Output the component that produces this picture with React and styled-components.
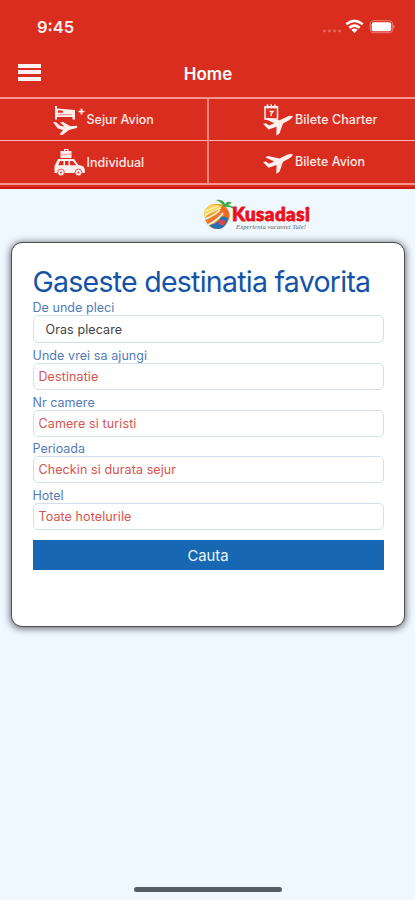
import styled, { createGlobalStyle } from "styled-components";

const GlobalStyle = createGlobalStyle`
  * {
    box-sizing: border-box;
  }

  body {
    margin: 0;
    background: #f0f8ff;
    font-family: Inter, "Liberation Sans", sans-serif;
  }
`;

const Screen = styled.div`
  display: flex;
  flex-direction: column;
  width: 415px;
  height: 900px;
  overflow: hidden;
  background: #f0f8ff;
`;

const Header = styled.header`
  height: 189px;
  background: #d92d20;
  color: #fff;
  border-bottom: 2px solid #d01a10;
`;

const StatusBar = styled.div`
  display: flex;
  align-items: center;
  height: 54px;
  padding: 0 20px 0 37px;
`;

const Time = styled.span`
  flex: 1;
  font-size: 16.5px;
  font-weight: 600;
  color: #ffeeec;
`;

const NavBar = styled.div`
  display: grid;
  grid-template-columns: 60px 1fr 60px;
  align-items: center;
  height: 43px;
  padding-bottom: 3px;
`;

const MenuButton = styled.button`
  display: flex;
  flex-direction: column;
  gap: 2.5px;
  width: 23px;
  margin: -4px 0 0 18px;
  padding: 0;
  border: none;
  background: none;

  span {
    height: 4px;
    background: #fff1f0;
  }
`;

const PageTitle = styled.h1`
  margin: 0;
  padding-left: 1px;
  text-align: center;
  font-size: 17px;
  line-height: 20px;
  font-weight: 600;
`;

const Tabs = styled.nav`
  display: grid;
  grid-template-columns: 209px 206px;
  grid-template-rows: 42px 42px;
  border-top: 2px solid #f7958e;
  border-bottom: 2px solid #f7958e;
`;

const Tab = styled.a`
  display: flex;
  align-items: center;
  padding-left: ${({ $left }) => ($left ? "53px" : "54px")};
  padding-bottom: ${({ $raise }) => $raise || 0}px;
  border-right: ${({ $left }) => ($left ? "2px solid #f3837b" : "none")};
  border-bottom: ${({ $top }) => ($top ? "1px solid #ffb5b0" : "none")};
  font-size: 12.5px;
  font-weight: 500;
  letter-spacing: ${({ $spacing }) => $spacing || 0}px;
  color: #ffe9e6;
  white-space: nowrap;

  svg {
    flex: none;
    margin-right: ${({ $left }) => ($left ? "0.6px" : "0")};
  }
`;

const LogoRow = styled.div`
  display: flex;
  height: 53px;
  padding: 9px 0 0 203px;
`;

const LogoText = styled.div`
  display: flex;
  flex-direction: column;
  padding-top: 7px;
  margin-left: -3px;
`;

const LogoName = styled.strong`
  font-family: Lato, sans-serif;
  font-size: 18.8px;
  line-height: 17px;
  font-weight: 900;
  letter-spacing: 0.45px;
  color: #ed111c;
  -webkit-text-stroke: 0.9px #ed111c;
`;

const LogoTagline = styled.em`
  margin: 1px 0 0 4px;
  font-family: "Liberation Serif", serif;
  font-size: 6.8px;
  line-height: 8px;
  color: #62666c;
  white-space: nowrap;
`;

const Card = styled.main`
  width: 394px;
  height: 385px;
  margin-left: 11px;
  padding: 22px 21px 0 20.5px;
  border: 1px solid #4b4e50;
  border-radius: 11px;
  background: #fff;
  box-shadow: 0 1px 7px 1px rgba(0, 0, 0, 0.55);
`;

const CardTitle = styled.h2`
  height: 34px;
  margin: 0;
  font-size: 28.5px;
  line-height: 33px;
  font-weight: 400;
  letter-spacing: -0.74px;
  color: #1454a8;
  white-space: nowrap;
`;

const Form = styled.form`
  display: flex;
  flex-direction: column;
  gap: 3.8px;
  width: 351px;
`;

const Field = styled.label`
  display: block;
  font-size: 12.5px;
  line-height: 16px;
  letter-spacing: ${({ $spacing }) => $spacing || 0}px;
  color: #527abc;
`;

const FieldLabel = styled.span`
  display: block;
  height: 16px;
  line-height: 17px;
`;

const FieldBox = styled.span`
  display: flex;
  align-items: center;
  height: ${({ $select }) => ($select ? "28px" : "27px")};
  padding-top: 1px;
  padding-left: ${({ $select }) => ($select ? "12px" : "5px")};
  border: 1px solid #d3dfef;
  border-radius: 5px;
  background: #fff;
  font-size: 12.5px;
  letter-spacing: ${({ $spacing }) => $spacing || 0}px;
  color: ${({ $select }) => ($select ? "#414141" : "#d9534d")};
`;

const SubmitButton = styled.button`
  height: 30px;
  margin-top: 6px;
  padding: 2px 0 0;
  border: none;
  background: #1767b3;
  color: #edf5fc;
  font-family: inherit;
  font-size: 14.8px;
`;

const HomeIndicator = styled.div`
  width: 148px;
  height: 5px;
  margin: auto auto 8px 134px;
  border-radius: 3px;
  background: #565d62;
`;

function StatusIcons() {
  return (
    <svg width="76" height="20" viewBox="0 0 76 20" fill="#fff">
      <g fill="#ea6a60">
        <circle cx="5.5" cy="14" r="1.4" />
        <circle cx="10.5" cy="14" r="1.4" />
        <circle cx="15.5" cy="14" r="1.4" />
        <circle cx="20.5" cy="14" r="1.4" />
      </g>
      <g fill="none" stroke="#fff" strokeWidth="2.6">
        <path d="M27.3 7.2Q35.5 .6 43.7 7.2" />
        <path d="M30.3 10.7Q35.5 6.6 40.7 10.7" />
      </g>
      <path d="M32.3 12.7Q35.5 10.2 38.7 12.7L35.5 16Z" />
      <rect x="51.2" y="3.7" width="22.5" height="12" rx="3.3" fill="#d92d20" stroke="#f07f77" />
      <rect x="52.7" y="5.2" width="19.5" height="9" rx="2" />
      <path d="M74.5 7.7Q76.8 9.7 74.5 11.7Z" fill="#f29a93" />
    </svg>
  );
}

const PLANE =
  "M0 8.5L3 8 6 10.3 11.2 8 2.3 3.7 5 2.5 16.5 5 23.5 1.6Q27.5 -.2 30 1 29.3 3 26 5L20 8.2 16.5 18.2 13.3 20.2 13.6 11.5 5.5 14.2Z";

function StayIcon() {
  return (
    <svg width="33" height="32" viewBox="0 0 33 32" fill="#fff0ee">
      <path d="M2 2H4V4.5L22 6V15.5H19.5V13H4V15.5H2Z" />
      <path d="M5 6.2L10 6.7V8.8H5Z" fill="#d92d20" />
      <path d="M5 10.7H19" stroke="#e8736a" strokeWidth=".8" />
      <path d="M28.5 4.5V10.5M25.5 7.5H31.5" stroke="#fff0ee" strokeWidth="1.7" />
      <path d="M0 18L3 18.2 7.5 22 11.5 22.5 7 18.4 10 18 17.5 22.2 23 21.7Q25.5 22.2 23.5 24L16 26 9.5 31 6.5 30.5 10 26 4.5 24.2Z" />
    </svg>
  );
}

function CarIcon() {
  return (
    <svg width="33" height="30" viewBox="0 0 33 30" fill="#fff0ee">
      <path d="M11 4V2H15.5V4H18.5V11H7.5V4ZM12.3 4H14.3V3H12.3Z" />
      <path d="M5 12H21L25.5 18 29.5 19Q32 20 32 26H1.5V19Z" />
      <path d="M7 14H10.5V18.3H5.2ZM12 14H15.5V18.3H12ZM17 14H20L23.2 18.3H17Z" fill="#d92d20" />
      <path d="M8 8.2L18 7" stroke="#e8736a" strokeWidth=".7" />
      <g stroke="#d92d20" strokeWidth=".8">
        <circle cx="8" cy="25.5" r="3.4" />
        <circle cx="25.5" cy="25.5" r="3.4" />
      </g>
      <circle cx="8" cy="25.5" r=".9" fill="#d92d20" />
      <circle cx="25.5" cy="25.5" r=".9" fill="#d92d20" />
    </svg>
  );
}

function CharterIcon() {
  return (
    <svg width="32" height="34" viewBox="0 0 32 34" fill="#fff0ee">
      <path d="M2 3.7H14.5V16H2Z" fill="none" stroke="#fff0ee" strokeWidth="1.5" />
      <path d="M2 4.5H14.5M4.5 1.3V5.5M8.2 1.3V5.5M12 1.3V5.5" stroke="#fff0ee" strokeWidth="1.5" />
      <path d="M6.5 8.5H10L8.2 11V13" fill="none" stroke="#fff0ee" strokeWidth="1.4" />
      <path d={PLANE} transform="translate(0 12.3)" />
    </svg>
  );
}

function PlaneIcon() {
  return (
    <svg width="32" height="24" viewBox="0 0 32 24" fill="#fff0ee">
      <path d={PLANE} transform="translate(0 3.5)" />
    </svg>
  );
}

function LogoMark() {
  return (
    <svg width="32" height="33" viewBox="0 0 32 33">
      <path d="M1 15Q4 5 14 6 25 5 26 16 26 29 16 31 6 32 3 23Z" fill="#f49b24" />
      <path d="M1 14Q5 5 15 7L22 10Q10 10 2 20Z" fill="#ffd45b" />
      <path d="M19 8Q30 13 25 23L20 28Q24 17 17 12Z" fill="#f26a22" />
      <path d="M2 22Q12 18 18 12L21 15Q17 21 5 26Z" fill="#f0782a" />
      <path d="M2.5 21Q12 17 17 12M5 27Q15 22 20 15" fill="none" stroke="#fdf6ec" strokeWidth="1.6" />
      <path d="M6.5 27Q14 26 18 19 22 17 25 21 22 31 15 31 9 31 6.5 27Z" fill="#2471b5" />
      <path d="M17 21Q20 24 23 22L21 27Q17 28 15 24Z" fill="#dc4653" />
      <path d="M3 13L15 8M2 17L18 10" stroke="#fff9d8" strokeWidth="1.1" />
      <path d="M20 9Q20 5 13 2 20 1 22 6 25 2 29 5L25 7Q31 8 31 11 26 8 20 9Z" fill="#43a947" />
    </svg>
  );
}

const fields = [
  { label: "De unde pleci", value: "Oras plecare", select: true, ls: 0.05, vs: 0.1 },
  { label: "Unde vrei sa ajungi", value: "Destinatie", ls: 0.08, vs: 0.1 },
  { label: "Nr camere", value: "Camere si turisti", ls: 0.03, vs: 0.12 },
  { label: "Perioada", value: "Checkin si durata sejur", ls: 0, vs: 0.1 },
  { label: "Hotel", value: "Toate hotelurile", ls: 0, vs: 0.1 },
];

export default function App() {
  return (
    <Screen>
      <GlobalStyle />
      <Header>
        <StatusBar>
          <Time>9:45</Time>
          <StatusIcons />
        </StatusBar>
        <NavBar>
          <MenuButton aria-label="Meniu">
            <span />
            <span />
            <span />
          </MenuButton>
          <PageTitle>Home</PageTitle>
        </NavBar>
        <Tabs>
          <Tab $left $top $spacing={-0.05}>
            <StayIcon />
            Sejur Avion
          </Tab>
          <Tab $top $spacing={0.05}>
            <CharterIcon />
            Bilete Charter
          </Tab>
          <Tab $left>
            <CarIcon />
            Individual
          </Tab>
          <Tab $raise={1}>
            <PlaneIcon />
            Bilete Avion
          </Tab>
        </Tabs>
      </Header>

      <LogoRow>
        <LogoMark />
        <LogoText>
          <LogoName>Kusadasi</LogoName>
          <LogoTagline>Experienta vacantei Tale!</LogoTagline>
        </LogoText>
      </LogoRow>

      <Card>
        <CardTitle>Gaseste destinatia favorita</CardTitle>
        <Form>
          {fields.map((field) => (
            <Field key={field.label} $spacing={field.ls}>
              <FieldLabel>{field.label}</FieldLabel>
              <FieldBox $select={field.select} $spacing={field.vs}>
                {field.value}
              </FieldBox>
            </Field>
          ))}
          <SubmitButton type="button">Cauta</SubmitButton>
        </Form>
      </Card>

      <HomeIndicator />
    </Screen>
  );
}
